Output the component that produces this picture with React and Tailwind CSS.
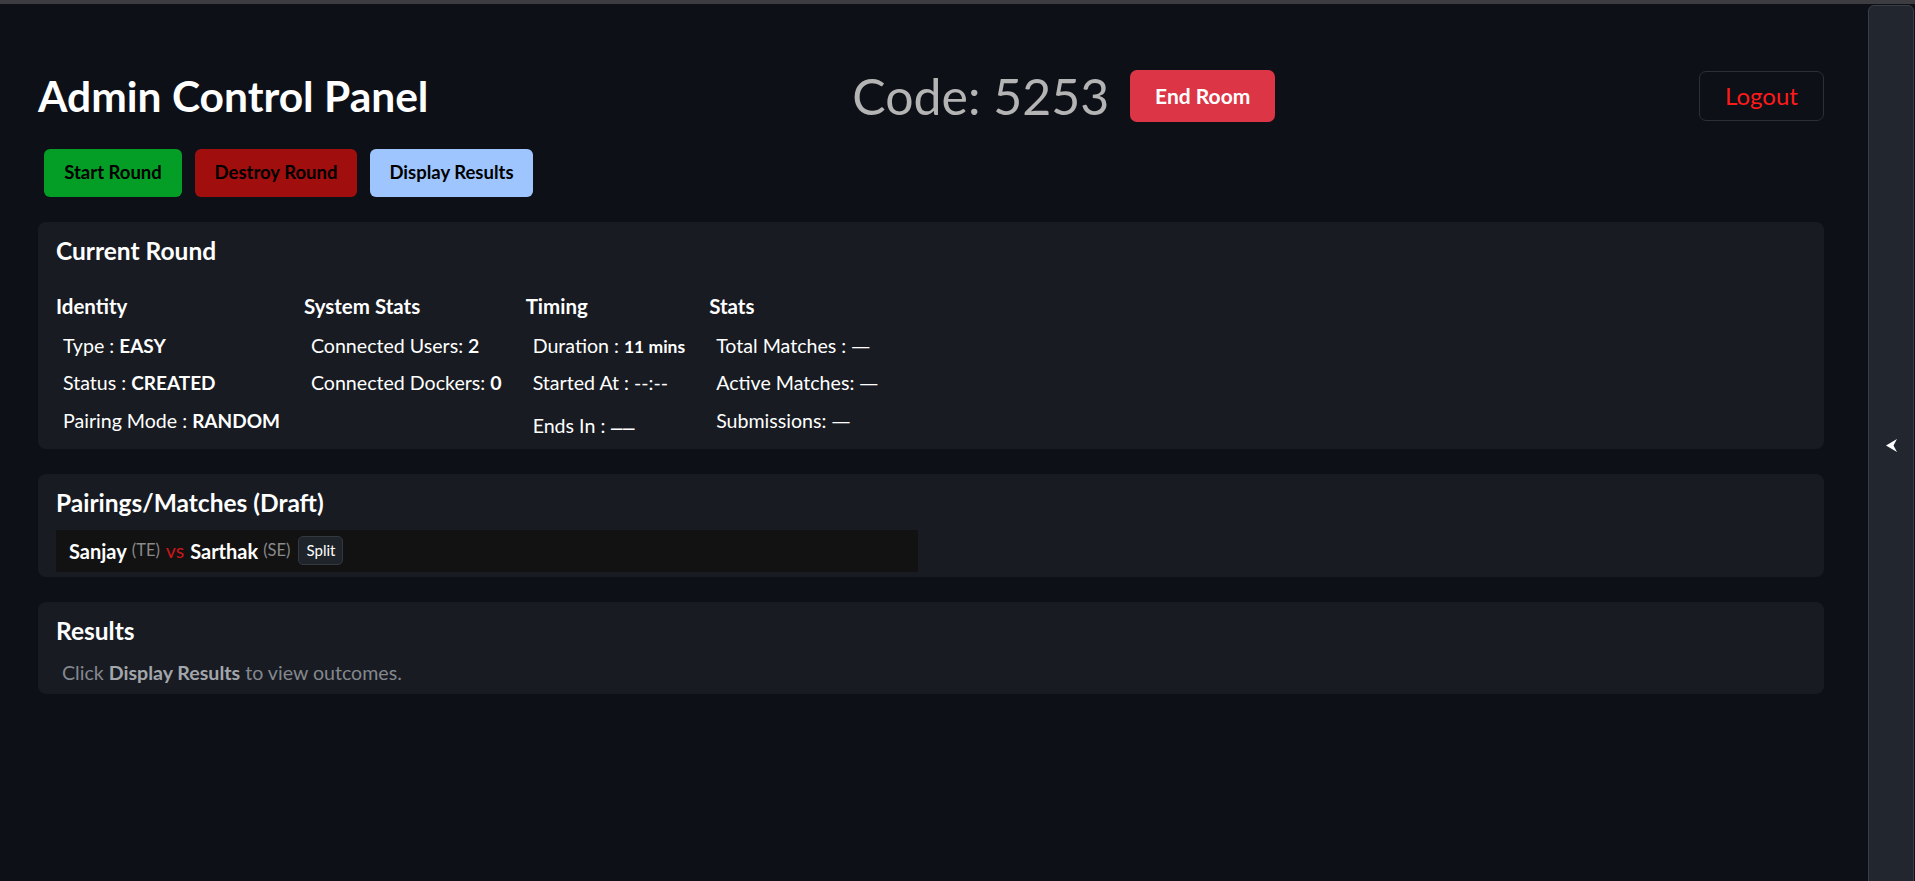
import React from "react";

function Dash() {
  return <span className="font-['DejaVu_Sans',sans-serif] text-[19px] leading-none">—</span>;
}

function Item({ label, value, valueClass = "font-bold text-[19px]", extra = "" }) {
  return (
    <div className={`pl-[7px] h-[27px] leading-[27px] text-[19.6px] text-white whitespace-nowrap ${extra}`}>
      {label}
      {value !== undefined && <span className={`leading-none ${valueClass}`}>{value}</span>}
    </div>
  );
}

function Column({ title, children }) {
  return (
    <div className="flex flex-col">
      <div className="text-[20.5px] leading-[24px] font-bold text-white whitespace-nowrap">{title}</div>
      <div className="mt-[13.5px] flex flex-col gap-[10.5px]">{children}</div>
    </div>
  );
}

export default function App() {
  return (
    <div className="min-h-screen h-[881px] bg-[#0d1017] flex flex-col font-['Lato',sans-serif] overflow-hidden">
      <div className="h-[4px] bg-[#3c3c41] shrink-0" />
      <div className="flex flex-1 min-h-0">
        <main className="flex-1 pl-[38px] pr-[44px] pt-[66px]">
          {/* Header */}
          <div className="flex items-center justify-between h-[52px]">
            <h1 className="text-[42.5px] font-bold text-white leading-[48px] whitespace-nowrap">Admin Control Panel</h1>
            <div className="flex items-center">
              <span className="text-[50px] leading-[56px] text-[#b4b4b4] whitespace-nowrap">Code: 5253</span>
              <button className="ml-[21px] h-[52px] w-[145px] rounded-[7px] bg-[#dc3545] text-white font-bold text-[21px]">
                End Room
              </button>
            </div>
            <button className="h-[50px] w-[125px] rounded-[7px] border border-[#2c2f37] text-[#ff1a1a] text-[24px]">
              Logout
            </button>
          </div>

          {/* Action buttons */}
          <div className="mt-[27px] ml-[6px] flex gap-[13px]">
            <button className="h-[48px] w-[138px] rounded-[6px] bg-[#049e26] text-black font-bold text-[18.5px]">
              Start Round
            </button>
            <button className="h-[48px] w-[162px] rounded-[6px] bg-[#a10e0e] text-black font-bold text-[18.5px]">
              Destroy Round
            </button>
            <button className="h-[48px] w-[163px] rounded-[6px] bg-[#9ec5fe] text-black font-bold text-[18.5px]">
              Display Results
            </button>
          </div>

          {/* Current Round */}
          <section className="mt-[25px] rounded-[8px] bg-[#181b22] pt-[16px] px-[18px] pb-[10px]">
            <h2 className="text-[24.5px] leading-[26px] font-bold text-white">Current Round</h2>
            <div className="mt-[30px] flex gap-[24px]">
              <Column title="Identity">
                <Item label="Type : " value="EASY" />
                <Item label="Status : " value="CREATED" />
                <Item label="Pairing Mode : " value="RANDOM" />
              </Column>
              <Column title="System Stats">
                <Item label="Connected Users: " value="2" valueClass="font-semibold" />
                <Item label="Connected Dockers: " value="0" valueClass="font-bold" />
              </Column>
              <Column title="Timing">
                <Item label="Duration : " value="11 mins" valueClass="font-bold text-[17.5px]" />
                <Item label="Started At : " value="--:--" valueClass="" />
                <Item
                  label="Ends In : "
                  value={<span className="font-['DejaVu_Sans',sans-serif] text-[13px] font-bold tracking-[-1px]">——</span>}
                  valueClass=""
                  extra="mt-[5px]"
                />
              </Column>
              <Column title="Stats">
                <Item label="Total Matches : " value={<Dash />} valueClass="" />
                <Item label="Active Matches: " value={<Dash />} valueClass="" />
                <Item label="Submissions: " value={<Dash />} valueClass="" />
              </Column>
            </div>
          </section>

          {/* Pairings */}
          <section className="mt-[25px] rounded-[8px] bg-[#181b22] pt-[16px] px-[18px] pb-[5px]">
            <h2 className="text-[24.5px] leading-[26px] font-bold text-white">Pairings/Matches (Draft)</h2>
            <div className="mt-[14px] h-[42px] w-[862px] bg-[#121212] flex items-center px-[13px] whitespace-nowrap">
              <span className="text-[20px] font-bold text-white">Sanjay</span>
              <span className="ml-[5px] text-[16.5px] text-[#8a8a8a]">(TE)</span>
              <span className="ml-[6px] text-[19.5px] text-[#c9161c]">vs</span>
              <span className="ml-[6px] text-[20px] font-bold text-white">Sarthak</span>
              <span className="ml-[5px] text-[16.5px] text-[#8a8a8a]">(SE)</span>
              <button className="ml-[8px] h-[29px] w-[45px] rounded-[5px] bg-[#1f232a] border border-[#343941] text-white text-[15px]">
                Split
              </button>
            </div>
          </section>

          {/* Results */}
          <section className="mt-[25px] rounded-[8px] bg-[#181b22] pt-[16px] px-[18px] pb-[8px]">
            <h2 className="text-[24.5px] leading-[26px] font-bold text-white">Results</h2>
            <p className="mt-[15.5px] pl-[6px] text-[19.6px] leading-[27px] text-[#84888e]">
              Click <span className="font-bold text-[#a3a6ab]">Display Results</span> to view outcomes.
            </p>
          </section>
        </main>

        <aside className="w-[46px] mr-[1px] mt-[1px] h-[882px] shrink-0 rounded-[6px] border border-[#3b3e46] bg-[#22262e] flex items-center justify-center">
          <svg width="11" height="13" viewBox="0 0 11 13" className="-mt-[2px]">
            <path d="M11 0 L0 6.5 L11 13 L7.5 6.5 Z" fill="#ffffff" />
          </svg>
        </aside>
      </div>
    </div>
  );
}
